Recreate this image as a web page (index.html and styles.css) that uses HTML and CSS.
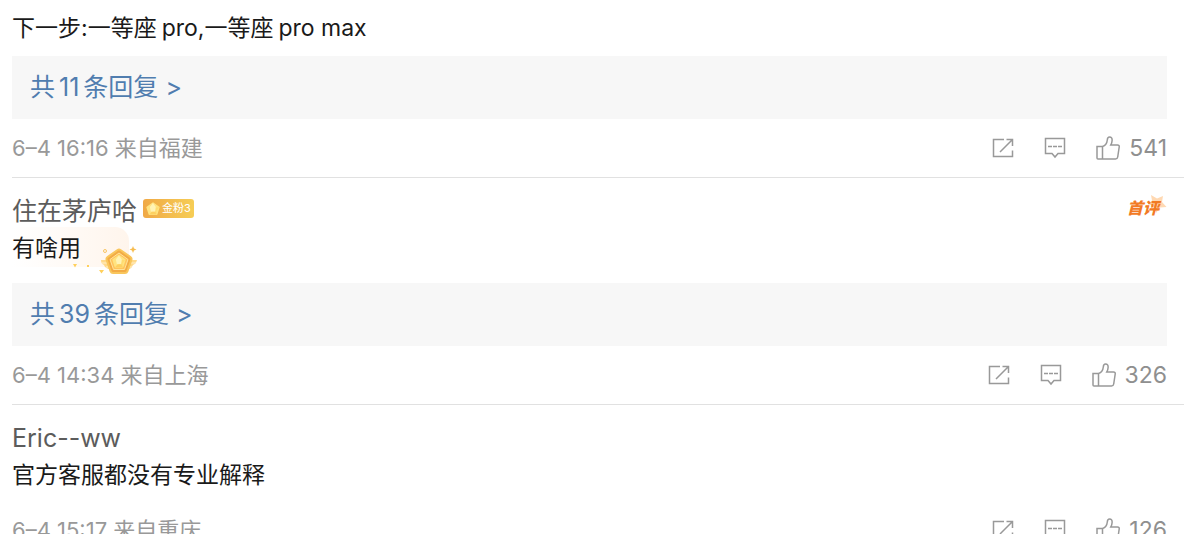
FILE: index.html
```html
<!DOCTYPE html>
<html lang="zh-CN">
<head>
    <meta charset="UTF-8">
    <meta name="viewport" content="width=device-width, initial-scale=1.0">
    <title>评论</title>
    <link rel="stylesheet" href="styles.css">
</head>
<body>

<svg class="sprite" aria-hidden="true">
    <symbol id="share" viewBox="0 0 22 22">
        <path d="M12 2.500H1.500v17h19V13.500M20.500 9V2.500H14.500M20.500 2.500l-12.500 12.500" />
    </symbol>
    <symbol id="reply" viewBox="0 0 22 22">
        <path d="M1.500 1.500h19v15h-6.500l-3 3.500-3-3.500H1.500zM4 9.500h4M9 9.500h4M14 9.500h4" />
    </symbol>
    <symbol id="like" viewBox="0 0 24 24">
        <path d="M1 10.500h5.500v12.500H2q-1 0-1-1zM6.500 10.500c3.500-1 4.500-3.500 4.800-6.500.1-2 1-3 2.300-3 1.700 0 2.700 1.300 2.500 3.500-.1 1.800-.6 3.300-1.300 4.500h6.700q2 0 1.700 2l-1.500 10q-.3 2-2.200 2H6.500" />
    </symbol>
    <symbol id="gem" viewBox="0 0 20 20">
        <path d="M10 1.500l8.500 6.200-3.200 10H4.700l-3.200-10z" fill="#ffe380" stroke="#ffe380" stroke-width="2" stroke-linejoin="round" />
        <path d="M10 1.500l3.500 6.500h5L15 13l.3 4.700L10 15z" fill="#ffdc70" />
        <path d="M10 1.500L5.500 7l1.500 7h6l1-7z" fill="#fff3b5" />
        <path d="M4.700 17.700L8 14h5l2.300 3.700z" fill="#fdd060" />
    </symbol>
</svg>

<div class="comment-list">
    <div class="comment">
        <p class="comment-text">下一步:一等座<span class="latin">pro</span>,一等座<span class="latin">pro max</span></p>
        <a class="replies" href="#">共<span class="number">11</span>条回复 &gt;</a>
        <div class="comment-footer">
            <span class="meta">6–4 16:16 来自福建</span>
            <div class="actions">
                <button class="action" aria-label="转发"><svg class="icon"><use href="#share" /></svg></button>
                <button class="action" aria-label="回复"><svg class="icon"><use href="#reply" /></svg></button>
                <button class="action like"><svg class="icon icon-like"><use href="#like" /></svg>541</button>
            </div>
        </div>
    </div>

    <div class="comment">
        <div class="comment-header">
            <a class="username" href="#">住在茅庐哈</a>
            <span class="fan-badge"><svg class="badge-gem"><use href="#gem" /></svg>金粉3</span>
            <span class="first-comment">
                <svg class="star" viewBox="0 0 20 20"><path d="M4 1l6 3.500L16 2l-1 6 4.500 5-6.500.5L9 19l-2-6.500L1 10l4-3.500z" fill="#ffd9b3" /></svg>
                <em>首评</em>
            </span>
        </div>
        <p class="comment-text with-medal">有啥用
            <svg class="medal" viewBox="0 0 70 34" aria-hidden="true">
                <!-- 翅膀 -->
                <path d="M34 16h36q-1 4-4 5-1 3-4 4H42q-4-1-5-4-3-1-3-5z" fill="#ffd98a" />
                <path d="M35 19h34M39 23h26" stroke="#fff0cb" stroke-width="1" />
                <!-- 奖牌 -->
                <path d="M52 8l10 7-4 11.500H46L42 15z" fill="#f9c65c" stroke="#f9c65c" stroke-width="7" stroke-linejoin="round" />
                <path d="M52 8l10 7-4 11.500H46L42 15z" fill="#f2ab45" stroke="#f2ab45" stroke-width="3" stroke-linejoin="round" />
                <path d="M52 9l9 6.500-3.500 10h-11L43 15.500z" fill="#ffc45c" stroke="#ffe39a" stroke-width="1" stroke-linejoin="round" />
                <use href="#gem" x="45" y="10" width="14" height="15" />
                <circle cx="38" cy="7" r="1.500" fill="none" stroke="#f9c565" />
                <path d="M66 2l1 2.500 2.500 1-2.500 1-1 2.500-1-2.500-2.500-1 2.500-1z" fill="#f7bc4f" />
                <path d="M6 20h4l-2 3.500zM32 26h5l-2.500 3.500zM20 21h2v2h-2z" fill="#ffd05c" />
            </svg>
        </p>
        <a class="replies" href="#">共<span class="number">39</span>条回复 &gt;</a>
        <div class="comment-footer">
            <span class="meta">6–4 14:34 来自上海</span>
            <div class="actions">
                <button class="action" aria-label="转发"><svg class="icon"><use href="#share" /></svg></button>
                <button class="action" aria-label="回复"><svg class="icon"><use href="#reply" /></svg></button>
                <button class="action like"><svg class="icon icon-like"><use href="#like" /></svg>326</button>
            </div>
        </div>
    </div>

    <div class="comment">
        <div class="comment-header">
            <a class="username" href="#">Eric--ww</a>
        </div>
        <p class="comment-text">官方客服都没有专业解释</p>
        <div class="comment-footer">
            <span class="meta">6–4 15:17 来自重庆</span>
            <div class="actions">
                <button class="action" aria-label="转发"><svg class="icon"><use href="#share" /></svg></button>
                <button class="action" aria-label="回复"><svg class="icon"><use href="#reply" /></svg></button>
                <button class="action like"><svg class="icon icon-like"><use href="#like" /></svg>126</button>
            </div>
        </div>
    </div>
</div>

</body>
</html>
```

FILE: styles.css
```css
* {
    box-sizing: border-box;
}

html {
    height: 100%;
    overflow: hidden;
}

body {
    margin: 0;
    background-color: #fff;
    font-family: Inter, 'Noto Sans CJK SC', sans-serif;
}

.sprite {
    display: none;
}

.comment-list {
    padding: 9px 0 0 12px;
}

.comment {
    padding-right: 17px;
}

.comment + .comment {
    padding-top: 14px;
    border-top: 1px solid #e1e1e1;
}

.comment-header {
    display: flex;
    align-items: center;
    height: 37px;
}

.username {
    color: #5c5c5c;
    font-size: 25px;
    line-height: 36px;
    text-decoration: none;
}

.fan-badge {
    display: flex;
    align-items: center;
    gap: 2px;
    height: 19px;
    margin: 0 0 4px 6px;
    padding: 0 3px;
    border-radius: 3px;
    background: linear-gradient(to right, #f0a946, #f6cd55);
    color: #fff;
    font-size: 11px;
    line-height: 19px;
}

.badge-gem {
    width: 14px;
    height: 14px;
}

.first-comment {
    position: relative;
    margin: 0 0 6px auto;
    padding-right: 8px;
    color: #f27a24;
    font-size: 16px;
    font-weight: 900;
    line-height: 20px;
}

.first-comment em {
    position: relative;
}

.star {
    position: absolute;
    top: -4px;
    right: 0;
    width: 20px;
    height: 20px;
}

.comment-text {
    margin: 0;
    color: #1a1a1a;
    font-size: 23px;
    line-height: 38px;
}

.latin {
    margin-left: 5px;
}

.with-medal {
    position: relative;
    z-index: 0;
    margin-bottom: 16px;
}

.with-medal::before {
    content: "";
    position: absolute;
    z-index: -1;
    top: -2px;
    left: 0;
    width: 117px;
    height: 40px;
    border-radius: 0 14px 0 0;
    background: linear-gradient(to right, #fff, #fff5ec);
}

.medal {
    position: absolute;
    top: 15px;
    left: 55px;
    width: 70px;
    height: 34px;
    overflow: visible;
}

.replies {
    display: block;
    margin-top: 9px;
    padding: 0 18px;
    background-color: #f7f7f7;
    color: #507daf;
    font-size: 25px;
    line-height: 63px;
    text-decoration: none;
}

.number {
    margin: 0 4px;
}

.comment-footer {
    display: flex;
    align-items: center;
    justify-content: space-between;
    height: 58px;
}

.comment-text + .comment-footer {
    margin-top: 7px;
}

.meta {
    color: #999;
    font-size: 22px;
    line-height: 28px;
}

.actions {
    display: flex;
    align-items: center;
    gap: 30px;
}

.action {
    display: flex;
    align-items: center;
    gap: 9px;
    padding: 0;
    border: none;
    background: none;
    color: #8f8f8f;
    font-family: inherit;
    font-size: 23px;
    line-height: 28px;
    cursor: pointer;
}

.icon {
    width: 22px;
    height: 22px;
    fill: none;
    stroke: #999;
    stroke-width: 1.5;
}

.icon-like {
    width: 24px;
    height: 24px;
}
```
